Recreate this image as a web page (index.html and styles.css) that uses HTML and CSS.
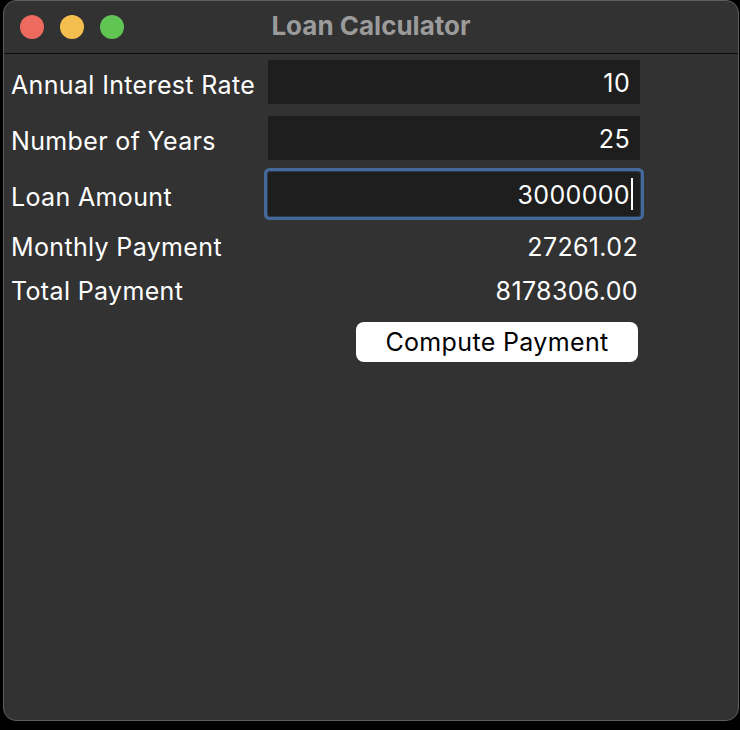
FILE: index.html
```html
<!DOCTYPE html>
<html lang="en">
<head>
<meta charset="utf-8">
<title>Loan Calculator</title>
<link rel="stylesheet" href="styles.css">
</head>
<body>
<div class="window">
  <div class="titlebar">
    <div class="lights">
      <span class="light red"></span>
      <span class="light yellow"></span>
      <span class="light green"></span>
    </div>
    <div class="title">Loan Calculator</div>
  </div>
  <div class="content">
    <div class="row row-field">
      <div class="label">Annual Interest Rate</div>
      <div class="field">10</div>
    </div>
    <div class="row row-field">
      <div class="label">Number of Years</div>
      <div class="field">25</div>
    </div>
    <div class="row row-field">
      <div class="label">Loan Amount</div>
      <div class="field focused">3000000<span class="caret"></span></div>
    </div>
    <div class="row row-monthly">
      <div class="label">Monthly Payment</div>
      <div class="value">27261.02</div>
    </div>
    <div class="row row-total">
      <div class="label">Total Payment</div>
      <div class="value">8178306.00</div>
    </div>
    <div class="row row-button">
      <div class="label"></div>
      <div class="btn-wrap"><button class="btn">Compute Payment</button></div>
    </div>
  </div>
</div>
</body>
</html>
```

FILE: styles.css
```css
html, body {
  margin: 0;
  padding: 0;
  background: #000;
}
body {
  width: 740px;
  height: 730px;
  font-family: Inter, "Liberation Sans", sans-serif;
  color: #fff;
}
.window {
  box-sizing: border-box;
  margin-left: 3px;
  width: 736px;
  height: 721px;
  background: #323232;
  border: 1px solid #5e5e5e;
  border-radius: 13px;
  overflow: hidden;
}
.titlebar {
  position: relative;
  height: 52px;
  border-bottom: 1px solid #0c0c0c;
  display: flex;
  align-items: center;
  justify-content: center;
}
.lights {
  position: absolute;
  left: 16px;
  top: 14px;
  display: flex;
  gap: 16px;
}
.light {
  width: 24px;
  height: 24px;
  border-radius: 50%;
  display: block;
}
.red { background: #ed6a5e; }
.yellow { background: #f5bf4f; }
.green { background: #61c554; }
.title {
  font-weight: 700;
  font-size: 26px;
  color: #9b9b9b;
  margin-top: -4px;
}
.content {
  padding: 6px 0 0 7px;
  letter-spacing: 0.35px;
}
.row {
  display: grid;
  grid-template-columns: 257px 372px;
  align-items: center;
}
.row-field {
  height: 44px;
  margin-bottom: 12px;
}
.row-monthly {
  height: 38px;
  margin-bottom: 6px;
}
.row-total {
  height: 38px;
  margin-bottom: 12px;
}
.row-button {
  height: 40px;
}
.label {
  font-size: 25px;
  white-space: nowrap;
}
.row-field .label {
  padding-top: 5px;
}
.field {
  box-sizing: border-box;
  height: 44px;
  background: #1e1e1e;
  font-size: 25px;
  text-align: right;
  padding-right: 10px;
  line-height: 46px;
  position: relative;
}
.field.focused {
  border-radius: 2px;
  box-shadow: 0 0 0 1px #2a3a52, 0 0 0 4px #45699b;
  padding-right: 7px;
}
.caret {
  display: inline-block;
  width: 2px;
  height: 32px;
  background: #fff;
  vertical-align: middle;
  margin-left: 1px;
  margin-top: -6px;
}
.value {
  font-size: 25px;
  text-align: right;
  padding-right: 2px;
}
.btn-wrap {
  display: flex;
  justify-content: flex-end;
  padding-right: 2px;
}
.btn {
  width: 282px;
  height: 40px;
  background: #fff;
  color: #000;
  border: none;
  border-radius: 8px;
  font-family: Inter, "Liberation Sans", sans-serif;
  font-size: 25px;
  letter-spacing: 0.35px;
  padding: 0;
}
```
